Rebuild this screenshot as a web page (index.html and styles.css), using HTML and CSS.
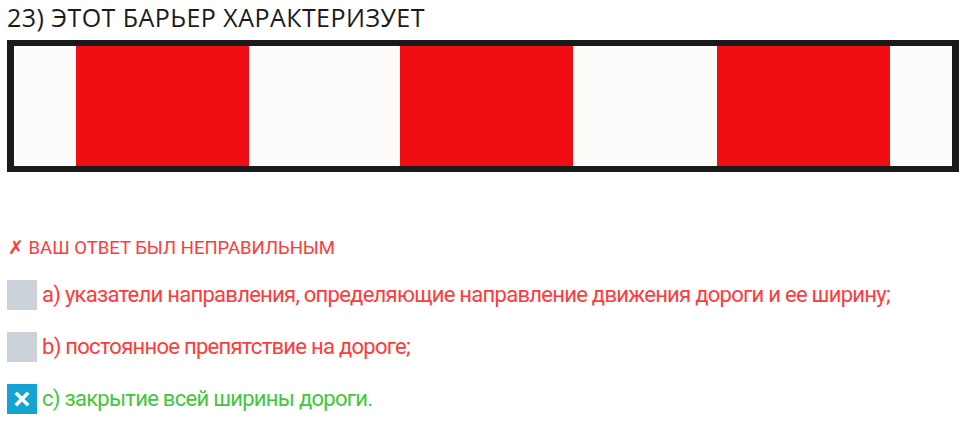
FILE: index.html
```html
<!DOCTYPE html>
<html lang="ru">
<head>
<meta charset="utf-8">
<link rel="stylesheet" href="styles.css">
</head>
<body>
<div class="page">
  <h1 class="title">23) ЭТОТ БАРЬЕР ХАРАКТЕРИЗУЕТ</h1>
  <div class="barrier">
    <div class="seg w1"></div>
    <div class="seg r"></div>
    <div class="seg w2"></div>
    <div class="seg r"></div>
    <div class="seg w3"></div>
    <div class="seg r"></div>
    <div class="seg w4"></div>
  </div>
  <div class="verdict">✗ ВАШ ОТВЕТ БЫЛ НЕПРАВИЛЬНЫМ</div>
  <ul class="options">
    <li class="option wrong"><span class="box"></span><span class="label">a) указатели направления, определяющие направление движения дороги и ее ширину;</span></li>
    <li class="option wrong"><span class="box"></span><span class="label">b) постоянное препятствие на дороге;</span></li>
    <li class="option right"><span class="box checked"><svg width="16" height="16" viewBox="0 0 16 16"><path d="M1.8 1.8 L14.2 14.2 M14.2 1.8 L1.8 14.2" stroke="#fff" stroke-width="3.6" stroke-linecap="butt"/></svg></span><span class="label">c) закрытие всей ширины дороги.</span></li>
  </ul>
</div>
</body>
</html>
```
FILE: styles.css
```css
html, body {
  margin: 0;
  padding: 0;
  background: #ffffff;
}
.page {
  padding: 0 7px;
}
.title {
  margin: 0;
  font-family: "Open Sans", sans-serif;
  font-weight: 400;
  font-size: 25px;
  letter-spacing: 0.45px;
  line-height: 34px;
  color: #1b1b1b;
}
.barrier {
  margin-top: 6px;
  width: 938px;
  height: 120px;
  border-style: solid;
  border-color: #1a1a1a;
  border-width: 6px 7px;
  display: flex;
  background: #fefcfa;
}
.seg { height: 100%; }
.w1 { width: 62px; }
.w2 { width: 151px; }
.w3 { width: 144px; }
.w4 { flex: 1; }
.r { width: 173px; background: #f00e14; }
.verdict {
  margin-top: 64px;
  font-family: Roboto, sans-serif;
  font-size: 18.5px;
  line-height: 24px;
  color: #ff3b3b;
  padding-left: 1px;
}
.options {
  list-style: none;
  margin: 20px 0 0;
  padding: 0;
  display: flex;
  flex-direction: column;
  gap: 22px;
}
.option {
  display: flex;
  align-items: center;
  gap: 5px;
  height: 30px;
}
.box {
  width: 30px;
  height: 30px;
  background: #cbd2da;
  display: flex;
  align-items: center;
  justify-content: center;
  flex: none;
}
.box.checked { background: #15a3d3; }
.label {
  font-family: Roboto, sans-serif;
  font-size: 22px;
  letter-spacing: -0.72px;
  line-height: 30px;
}
.wrong .label { color: #ff3b3b; }
.right .label { color: #42c63c; }
```
